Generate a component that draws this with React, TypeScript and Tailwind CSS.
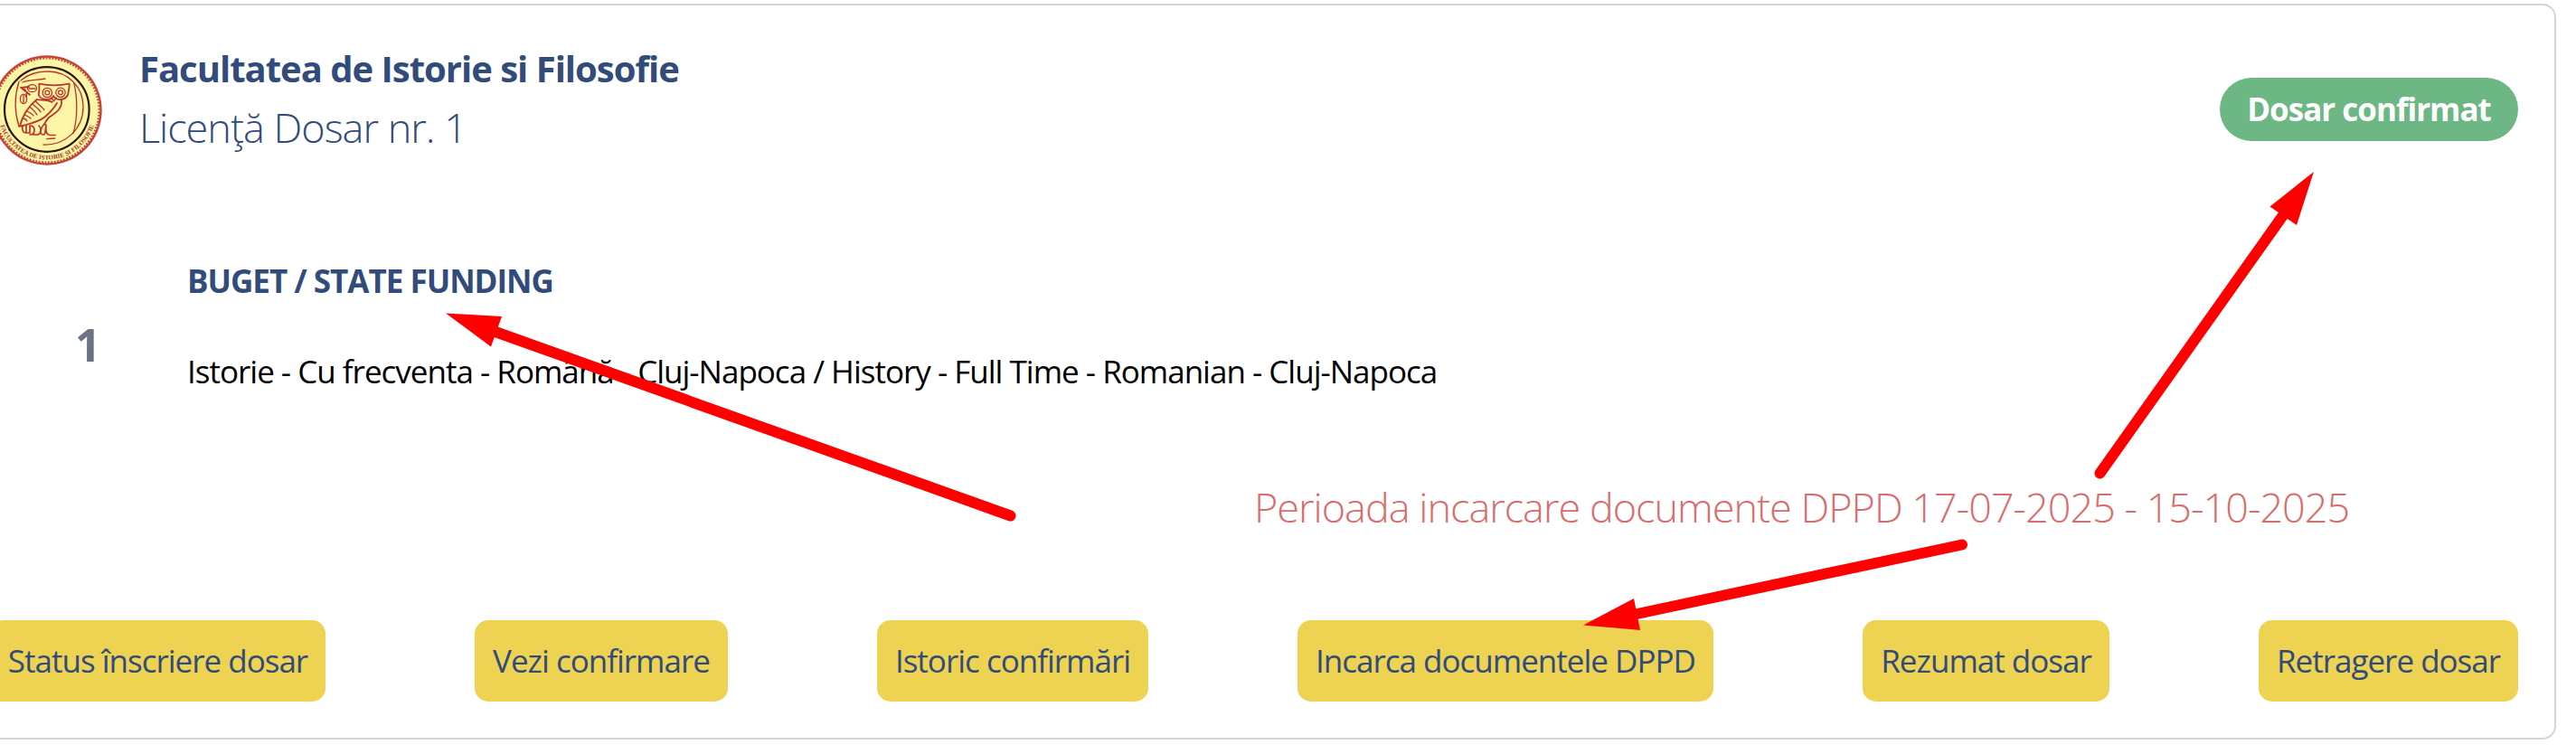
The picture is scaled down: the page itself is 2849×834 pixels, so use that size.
import React from 'react';

type ArrowProps = { tip: string; from: [number, number]; to: [number, number] };

const Arrow = ({ tip, from, to }: ArrowProps) => (
  <g>
    <line x1={from[0]} y1={from[1]} x2={to[0]} y2={to[1]} stroke="#ff0000" strokeWidth="12" strokeLinecap="round" />
    <polygon points={tip} fill="#ff0000" />
  </g>
);

const Crest = () => (
  <svg className="block h-[122px] w-[122px]" viewBox="0 0 122 122" fill="none">
    <circle cx="61" cy="61" r="60.7" fill="#c4453a" />
    <circle cx="61" cy="61" r="56.5" fill="#fbf6a6" />
    <circle cx="61" cy="61" r="57" stroke="#fbf6a6" strokeWidth="2.4" strokeDasharray="1.6 1.8" />
    <circle cx="60.8" cy="60" r="46.8" stroke="#2e1510" strokeWidth="2.2" />
    <g stroke="#bb332b" strokeWidth="1.3" strokeLinecap="round" strokeLinejoin="round">
      <path d="M32 28C40 21 50 18 62 18c22 0 39 17 39 39 0 24-19 43-44 42" />
      <path d="M30 29c-5 16-5 34 0 50M34 30c8-3 16-2 25-4M90.7 30.7c4 16 4.500 38-.7 56M60.7 92.7l9-.7" />
      <path d="M52.3 31.7c10 2 23 2 33.4 0 0 4-1 9-1.7 12.3-3 6-13 7-15.7 1-3 6-14 5-16.6-1 .8-4 1-8 .6-12.300z" strokeWidth="1.8" />
      <path d="M66 47l2.300 4 3-4" />
      <circle cx="61.3" cy="41.5" r="5.2" />
      <circle cx="61.3" cy="41.5" r="2.4" />
      <circle cx="76" cy="41.3" r="5.2" />
      <circle cx="76" cy="41.3" r="2.4" />
      <path d="M49.7 49C41 56 34 67 30.7 79 42 76 52 74 59 68c6-5 10-10 13-15M49.7 49c3 1 12 0 17 3M77 50c1 10-7 14-14 19-3 3-4 5-5 8" strokeWidth="1.8" />
      <path d="M48 50.5c3 4 7 6 10 10M45 54c3 3 7 5 9 9M42 57c3 3 6 5 8 9M38 62c3 1 6 2 8 5M36 66c3 1 5 2 7 4M34 70c2 0 4 1 5 3" />
      <path d="M34 78c-1 4 0 8 4 8h4v-8M38 78v7M42 78c3 0 5 2 5 5s-2 5-5 5M46 88h5c4-2 4-7 1-10M58 76c-4 4-6 12-1 12 3 0 2-7 3-11M60 77c-1 8 1 11 4 11.500h6" strokeWidth="1.7" />
      <path d="M32 35.7l10 8M35 37c3 2 4 5 3 9M33 36l8-1" strokeWidth="1.8" />
      <ellipse cx="44.5" cy="36.7" rx="5" ry="4" />
      <path d="M41 37h7M35 45v7" />
      <ellipse cx="35" cy="48.5" rx="3.6" ry="5" />
    </g>
    <path id="crest-arc" d="M6.5 61A54.5 54.5 0 0 0 115.5 61" />
    <text className="fill-[#a8342e] font-['Liberation_Serif',serif] text-[7px] font-bold">
      <textPath href="#crest-arc" startOffset="50%" textAnchor="middle">FACULTATEA DE ISTORIE ȘI FILOSOFIE</textPath>
    </text>
  </svg>
);

const actions = [
  { label: 'Status înscriere dosar', width: 'w-[371px]' },
  { label: 'Vezi confirmare', width: 'w-[280px]' },
  { label: 'Istoric confirmări', width: 'w-[300px]' },
  { label: 'Incarca documentele DPPD', width: 'w-[460px]' },
  { label: 'Rezumat dosar', width: 'w-[273px]' },
  { label: 'Retragere dosar', width: 'w-[287px]' },
];

export default function App() {
  return (
    <div className="relative h-[834px] w-full overflow-hidden bg-white pt-1 font-['Open_Sans',sans-serif] tracking-[-1px] text-[#314b7a]">
      <main className="-ml-[54px] flex h-[814px] w-[2881px] flex-col rounded-[15px] border-2 border-[#d1d5db] pr-10 pl-[41px]">
        <header className="mt-[40px] flex h-[135px] justify-between">
          <div className="flex">
            <div className="mt-[15px] ml-[2px] w-[163px] tracking-normal"><Crest /></div>
            <div className="whitespace-nowrap">
              <h1 className="text-[40px] leading-[60px] font-bold">Facultatea de Istorie si Filosofie</h1>
              <p className="mt-[5px] text-[45px] leading-[60px] font-light">Licenţă Dosar nr. 1</p>
            </div>
          </div>
          <div className="mt-[40px] flex h-[70px] w-[330px] items-center justify-center rounded-full bg-[#6db784] text-[35px] leading-[52px] font-bold whitespace-nowrap text-white">Dosar confirmat</div>
        </header>
        <section className="mt-[100px] flex h-[170px] items-start">
          <div className="mt-[64px] ml-[94px] w-[124px] text-[50px] leading-[72px] font-bold text-[#6b7280]">1</div>
          <div className="whitespace-nowrap">
            <h2 className="mt-[3px] text-[35px] leading-[54px] font-bold">BUGET / STATE FUNDING</h2>
            <p className="mt-[46px] text-[35px] leading-[54px] text-black">Istorie - Cu frecventa - Română - Cluj-Napoca / History - Full Time - Romanian - Cluj-Napoca</p>
          </div>
        </section>
        <p className="mt-[76px] ml-[1398px] text-[45px] leading-[68px] font-light whitespace-nowrap text-[#d96c6c]">Perioada incarcare documente DPPD 17-07-2025 - 15-10-2025</p>
        <nav className="mt-[91px] flex justify-between">
          {actions.map((a) => (
            <button key={a.label} className={`${a.width} h-[90px] rounded-[15px] bg-[#eed252] text-center text-[35px] leading-[52px] tracking-[-1px] whitespace-nowrap`}>{a.label}</button>
          ))}
        </nav>
      </main>
      <svg className="pointer-events-none absolute inset-0 h-[834px] w-[2849px]" viewBox="0 0 2849 834">
        <Arrow tip="493,346.5 555,350 543,383.5" from={[1117.5, 570.5]} to={[545, 366]} />
        <Arrow tip="2559,190 2510.5,228.5 2540,249" from={[2322.5, 523.5]} to={[2528, 234]} />
        <Arrow tip="1751,691.5 1807,662 1814,697" from={[2170, 602.5]} to={[1806, 680]} />
      </svg>
    </div>
  );
}
